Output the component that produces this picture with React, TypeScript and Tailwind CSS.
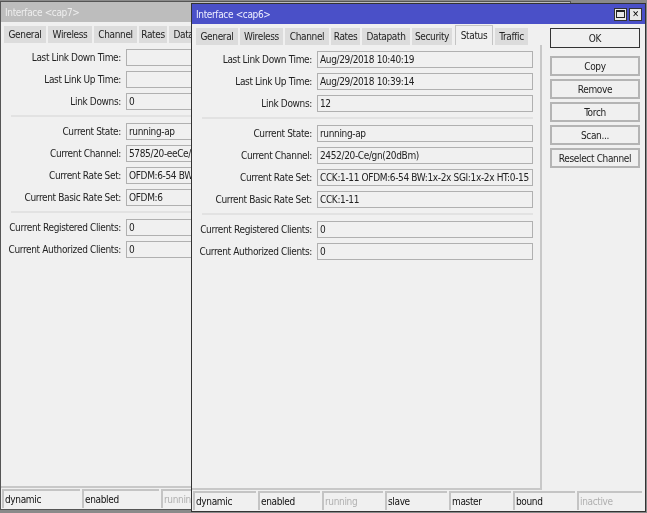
type Row = { label: string; value: string } | "sep";

const sans = "font-['DejaVu_Sans',Arial,sans-serif] [font-stretch:condensed] text-[10px] tracking-[-0.35px] text-[#222]";

function Field({ label, value }: { label: string; value: string }) {
  return (
    <div className="flex h-[22px] items-center">
      <div className="w-[120px] shrink-0 whitespace-nowrap text-right">{label}</div>
      <div className="ml-[5px] flex h-[17px] w-[216px] shrink-0 items-center overflow-hidden whitespace-nowrap border border-[#b0b0b0] bg-[#f0f0f0] pl-[2px]">
        {value}
      </div>
    </div>
  );
}

function Rows({ rows }: { rows: Row[] }) {
  return (
    <div className="flex flex-col pt-[3px]">
      {rows.map((r, i) =>
        r === "sep" ? (
          <div key={i} className="my-[3px] ml-[10px] h-[2px] w-[331px] shrink-0 bg-[#e2e2e2]" />
        ) : (
          <Field key={i} label={r.label} value={r.value} />
        ),
      )}
    </div>
  );
}

function Tabs({ tabs, active }: { tabs: [string, number, number][]; active?: string }) {
  return (
    <div className="flex h-[17px]">
      {tabs.map(([t, w, ml]) => (
        <div
          key={t}
          style={{ width: w, marginLeft: ml }}
          className={
            t === active
              ? "z-10 -mt-[3px] flex h-[20px] shrink-0 items-center justify-center overflow-hidden border border-b-0 border-[#c4c4c4] bg-[#f0f0f0]"
              : "flex h-[17px] shrink-0 items-center justify-center overflow-hidden whitespace-nowrap bg-[#dcdcdc]"
          }
        >
          {t}
        </div>
      ))}
    </div>
  );
}

function Status({ cells }: { cells: [string, number, boolean?][] }) {
  return (
    <div className="flex h-[19px] gap-[2px] pl-[1px]">
      {cells.map(([t, w, off]) => (
        <div
          key={t}
          style={{ width: w }}
          className={
            "flex h-[19px] shrink-0 items-center overflow-hidden border-l-2 border-t-2 border-[#c4c4c4] pl-[1px] " +
            (off ? "text-[#b0b0b0]" : "text-[#111]")
          }
        >
          {t}
        </div>
      ))}
    </div>
  );
}

const backRows: Row[] = [
  { label: "Last Link Down Time:", value: "" },
  { label: "Last Link Up Time:", value: "" },
  { label: "Link Downs:", value: "0" },
  "sep",
  { label: "Current State:", value: "running-ap" },
  { label: "Current Channel:", value: "5785/20-eeCe/an(20dBm)" },
  { label: "Current Rate Set:", value: "OFDM:6-54 BW:1x-2x" },
  { label: "Current Basic Rate Set:", value: "OFDM:6" },
  "sep",
  { label: "Current Registered Clients:", value: "0" },
  { label: "Current Authorized Clients:", value: "0" },
];

const frontRows: Row[] = [
  { label: "Last Link Down Time:", value: "Aug/29/2018 10:40:19" },
  { label: "Last Link Up Time:", value: "Aug/29/2018 10:39:14" },
  { label: "Link Downs:", value: "12" },
  "sep",
  { label: "Current State:", value: "running-ap" },
  { label: "Current Channel:", value: "2452/20-Ce/gn(20dBm)" },
  { label: "Current Rate Set:", value: "CCK:1-11 OFDM:6-54 BW:1x-2x SGI:1x-2x HT:0-15" },
  { label: "Current Basic Rate Set:", value: "CCK:1-11" },
  "sep",
  { label: "Current Registered Clients:", value: "0" },
  { label: "Current Authorized Clients:", value: "0" },
];

const tabsFront: [string, number, number][] = [
  ["General", 42, 4], ["Wireless", 43, 2], ["Channel", 44, 2], ["Rates", 29, 2], ["Datapath", 48, 2],
  ["Security", 40, 2], ["Status", 38, 3], ["Traffic", 33, 2],
];
const tabsBack: [string, number, number][] = [
  ["General", 42, 3], ["Wireless", 44, 2], ["Channel", 43, 2], ["Rates", 28, 2], ["Datapath", 48, 2],
];

function Btn({ children, primary, className = "" }: { children: string; primary?: boolean; className?: string }) {
  return (
    <div
      className={
        "flex h-[20px] w-[90px] items-center justify-center bg-[#f0f0f0] " +
        (primary ? "border border-[#333] " : "border-2 border-[#b4b4b4] ") +
        className
      }
    >
      {children}
    </div>
  );
}

export default function App() {
  return (
    <div className={"relative h-[513px] w-[647px] overflow-hidden bg-[#8a8a8a] blur-[0.3px] " + sans}>
      {/* back window */}
      <div className="absolute left-0 top-[1px] flex h-[509px] w-[571px] flex-col border border-[#555] bg-[#f0f0f0]">
        <div className="flex h-[20px] shrink-0 items-center bg-[#bdbdbd] pl-[4px] text-[#eeeeee]">Interface &lt;cap7&gt;</div>
        <div className="mt-[4px]">
          <Tabs tabs={tabsBack} />
        </div>
        <div className="flex-1">
          <Rows rows={backRows} />
        </div>
        <div className="h-[2px] w-full bg-[#c8c8c8]" />
        <div className="pb-[1px] pt-[1px]">
          <Status cells={[["dynamic", 78], ["enabled", 77], ["running", 62, true]]} />
        </div>
      </div>

      {/* front window */}
      <div className="absolute left-[191px] top-[3px] flex h-[509px] w-[455px] flex-col border border-[#333] bg-[#f0f0f0]">
        <div className="flex h-[20px] shrink-0 items-center justify-between bg-[#4a50c8] pl-[4px] pr-[3px] text-[#eef]">
          <span>Interface &lt;cap6&gt;</span>
          <div className="flex gap-[2px]">
            <div className="flex h-[13px] w-[13px] items-center justify-center border border-[#333] bg-[#e8e8e8]">
              <div className="h-[8px] w-[9px] border border-t-2 border-[#222]" />
            </div>
            <div className="flex h-[13px] w-[13px] items-center justify-center border border-[#333] bg-[#e8e8e8] text-[9px] font-bold leading-none text-black">✕</div>
          </div>
        </div>
        <div className="flex flex-1 pt-[4px]">
          <div className="flex w-[350px] shrink-0 flex-col">
            <Tabs tabs={tabsFront} active="Status" />
            <div className="h-[445px] w-[350px] border-b-2 border-r-2 border-[#c8c8c8]">
              <Rows rows={frontRows} />
            </div>
          </div>
          <div className="ml-[8px] flex flex-col gap-[3px]">
            <Btn primary>OK</Btn>
            <Btn className="mt-[5px]">Copy</Btn>
            <Btn>Remove</Btn>
            <Btn>Torch</Btn>
            <Btn>Scan...</Btn>
            <Btn>Reselect Channel</Btn>
          </div>
        </div>
        <div className="pb-[1px]">
          <Status
            cells={[
              ["dynamic", 63], ["enabled", 62], ["running", 61, true], ["slave", 62],
              ["master", 62], ["bound", 62], ["inactive", 65, true],
            ]}
          />
        </div>
      </div>
    </div>
  );
}
